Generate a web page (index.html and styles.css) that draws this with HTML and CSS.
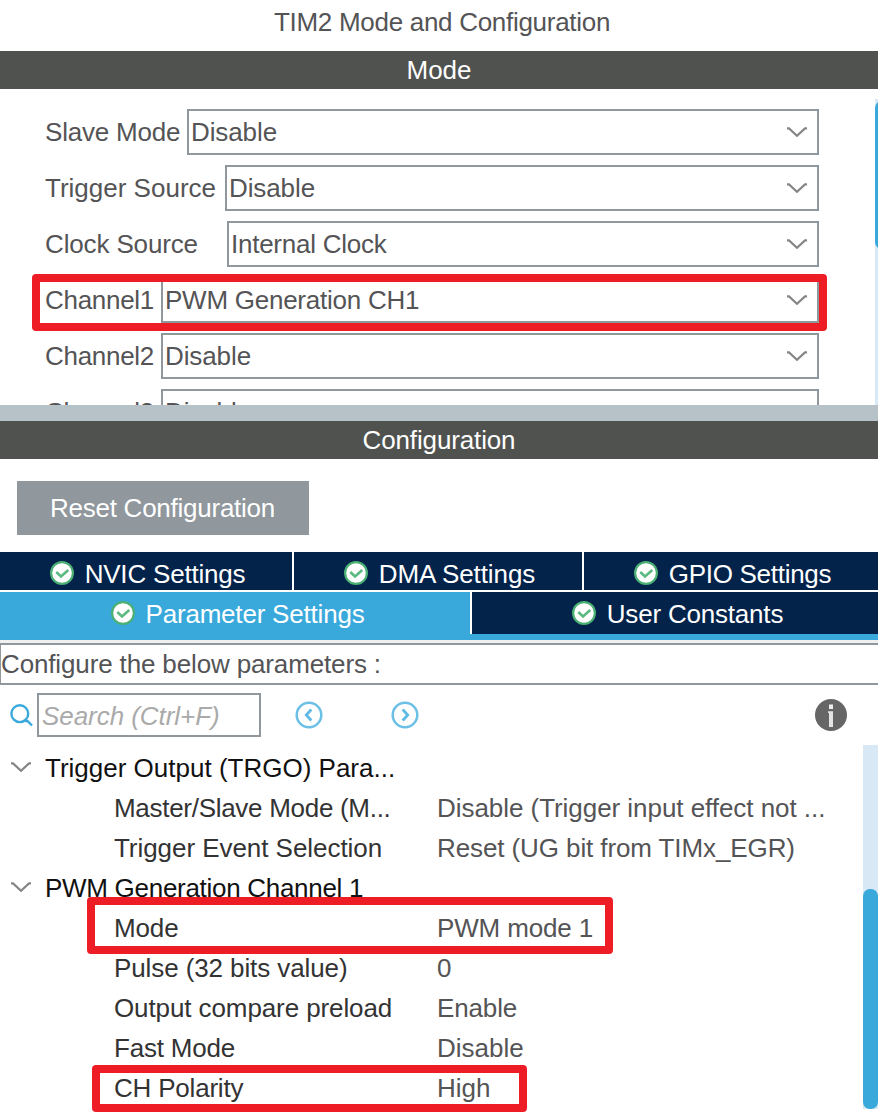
FILE: index.html
```html
<!DOCTYPE html>
<html lang="en">
<head>
<meta charset="utf-8">
<title>TIM2 Mode and Configuration</title>
<link rel="stylesheet" href="styles.css">
</head>
<body>
<svg class="defs" aria-hidden="true">
  <symbol id="chevron" viewBox="0 0 20 11"><path d="M0 1.4 H2 L10 8.8 L18 1.4 H20" fill="none" stroke="#858585" stroke-width="2.1"/></symbol>
  <symbol id="check" viewBox="0 0 24 24"><circle cx="12" cy="12" r="10.9" fill="#fff" stroke="#4bb073" stroke-width="2.2"/><path d="M6.3 11 L11 15.5 L18.3 9" fill="none" stroke="#5cba80" stroke-width="2.6"/></symbol>
</svg>
<main class="app">
  <h1 class="title"><span class="k6">TIM2 Mode and Configuration</span></h1>
  <h2 class="bar">Mode</h2>
  <section class="mode">
    <div class="fields">
      <div class="field"><label class="w-slave k4">Slave Mode</label><div class="combo"><span class="k2">Disable</span><svg class="chev"><use href="#chevron"/></svg></div></div>
      <div class="field"><label class="w-trigger">Trigger Source</label><div class="combo"><span class="k2">Disable</span><svg class="chev"><use href="#chevron"/></svg></div></div>
      <div class="field"><label class="w-clock k3">Clock Source</label><div class="combo"><span class="k5">Internal Clock</span><svg class="chev"><use href="#chevron"/></svg></div></div>
      <div class="field"><label class="w-channel k6">Channel1</label><div class="combo"><span class="k5">PWM Generation CH1</span><svg class="chev"><use href="#chevron"/></svg></div><i class="mark mark-channel"></i></div>
      <div class="field"><label class="w-channel k6">Channel2</label><div class="combo"><span class="k2">Disable</span><svg class="chev"><use href="#chevron"/></svg></div></div>
      <div class="field"><label class="w-channel k6">Channel3</label><div class="combo"><span class="k2">Disable</span><svg class="chev"><use href="#chevron"/></svg></div></div>
    </div>
    <div class="mode-scroll"><div class="mode-thumb"></div></div>
  </section>
  <div class="splitter"></div>
  <h2 class="bar"><span class="k3">Configuration</span></h2>
  <div class="actions"><button class="reset k5">Reset Configuration</button></div>
  <nav class="tabs">
    <div class="tabrow upper">
      <div class="tab"><svg class="ok"><use href="#check"/></svg><span class="k4">NVIC Settings</span></div>
      <div class="tab"><svg class="ok"><use href="#check"/></svg><span class="k2">DMA Settings</span></div>
      <div class="tab"><svg class="ok"><use href="#check"/></svg><span class="k6">GPIO Settings</span></div>
    </div>
    <div class="tabrow lower">
      <div class="tab active"><svg class="ok"><use href="#check"/></svg><span class="k4">Parameter Settings</span></div>
      <div class="tab"><svg class="ok"><use href="#check"/></svg><span class="k4">User Constants</span></div>
    </div>
  </nav>
  <div class="hint"><span class="k3">Configure the below parameters :</span></div>
  <div class="tools">
    <svg class="lens" viewBox="0 0 24 24"><circle cx="10.8" cy="10.7" r="8.4" fill="none" stroke="#39a9dc" stroke-width="2.4"/><path d="M15.5 18 H18.5 L23 22.5" fill="none" stroke="#39a9dc" stroke-width="2.4"/></svg>
    <div class="search"><span class="k1">Search (Ctrl+F)</span></div>
    <svg class="prev" viewBox="0 0 28 28"><circle cx="14" cy="14" r="12.3" fill="none" stroke="#6cc0e6" stroke-width="2.5"/><path d="M16.3 8.5 L11.3 14 L16.3 19.5" fill="none" stroke="#5fb9e3" stroke-width="2.8"/></svg>
    <svg class="next" viewBox="0 0 28 28"><circle cx="14" cy="14" r="12.3" fill="none" stroke="#6cc0e6" stroke-width="2.5"/><path d="M11.7 8.5 L16.7 14 L11.7 19.5" fill="none" stroke="#5fb9e3" stroke-width="2.8"/></svg>
    <svg class="info" viewBox="0 0 32 32"><circle cx="16" cy="16" r="16" fill="#666"/><rect x="14" y="5.5" width="4" height="4.5" fill="#eee"/><path d="M13 12.3 H18 V28 H14 V14 H13 Z" fill="#e4e4e4"/></svg>
  </div>
  <section class="params">
    <div class="tree">
      <div class="group"><svg class="chev"><use href="#chevron"/></svg><span>Trigger Output (TRGO) Para...</span></div>
      <div class="row"><span class="name k6">Master/Slave Mode (M...</span><span class="value k1">Disable (Trigger input effect not ...</span></div>
      <div class="row"><span class="name k1">Trigger Event Selection</span><span class="value k2">Reset (UG bit from TIMx_EGR)</span></div>
      <div class="group"><svg class="chev"><use href="#chevron"/></svg><span class="k6">PWM Generation Channel 1</span></div>
      <div class="row"><span class="name k3">Mode</span><span class="value k3">PWM mode 1</span><i class="mark mark-mode"></i></div>
      <div class="row"><span class="name k2">Pulse (32 bits value)</span><span class="value">0</span></div>
      <div class="row"><span class="name k2">Output compare preload</span><span class="value k3">Enable</span></div>
      <div class="row"><span class="name k4">Fast Mode</span><span class="value">Disable</span></div>
      <div class="row"><span class="name k4">CH Polarity</span><span class="value">High</span><i class="mark mark-polarity"></i></div>
    </div>
    <div class="param-scroll"><div class="param-thumb"></div></div>
  </section>
</main>
</body>
</html>
```
FILE: styles.css
```css
* { box-sizing: border-box; }
body { margin: 0; background: #fff; overflow: hidden; }
.defs { display: none; }
.app {
  width: 878px; height: 1114px; display: flex; flex-direction: column; overflow: hidden;
  font: 26px/30px "Liberation Sans", Arial, sans-serif; color: #545456; white-space: nowrap;
}
/* tracking steps */
.k1 { letter-spacing: -.05px; }
.k2 { letter-spacing: -.1px; }
.k3 { letter-spacing: -.14px; }
.k4 { letter-spacing: -.2px; }
.k5 { letter-spacing: -.25px; }
.k6 { letter-spacing: -.29px; }

.title, .bar { margin: 0; font-size: 26px; font-weight: 400; text-align: center; flex: none; }
.title { height: 51px; padding: 7px 0 0 6px; }
.bar { height: 38px; padding-top: 4px; background: #50524f; color: #fff; }

.mode { height: 316px; display: flex; justify-content: space-between; padding-left: 45px; overflow: hidden; flex: none; }
.fields { width: 774px; padding-top: 20px; display: flex; flex-direction: column; gap: 10px; }
.field { position: relative; display: flex; height: 46px; flex: none; }
.field label { padding-top: 8px; flex: none; }
.w-slave { width: 142px; }
.w-trigger { width: 180px; }
.w-clock { width: 182px; }
.w-channel { width: 116px; }
.combo { flex: 1; display: flex; justify-content: space-between; border: 2px solid #90979d; padding: 6px 10px 0 2px; }
.chev { width: 20px; height: 11px; flex: none; }
.combo .chev { margin-top: 10px; }
.mode-scroll { width: 3px; margin-top: 10px; padding-top: 2px; background: #d9e8f5; overflow: hidden; }
.mode-thumb { width: 15px; height: 148px; border-radius: 7px; background: #39a9dc; }

.mark { position: absolute; border: 8px solid #ee1c25; border-radius: 4px; }
.mark-channel { left: -13px; top: -3px; width: 795px; height: 57px; }
.mark-mode { left: 87px; top: -11px; width: 526px; height: 57px; }
.mark-polarity { left: 92px; top: -3px; width: 435px; height: 47px; }

.splitter { height: 16px; background: #b7c2c8; flex: none; }
.actions { height: 93px; padding: 22px 17px; flex: none; }
.reset { display: block; width: 292px; height: 54px; padding: 0 1px 0 0; border: 0; background: #90979d; color: #fff; font: inherit; }

.tabs { height: 88px; display: flex; flex-direction: column; gap: 2px; flex: none; color: #fff; }
.tabrow { display: grid; column-gap: 2px; }
.upper { height: 38px; grid-template-columns: 292px 288px 1fr; }
.lower { height: 48px; grid-template-columns: 470px 1fr; border-bottom: 6px solid #39a9dc; }
.tab { display: flex; justify-content: center; gap: 11px; background: #03234b; padding: 7px 0 0 3px; }
.lower .tab { height: 42px; padding-left: 5px; }
.tab.active { height: 48px; background: #39a9dc; }
.ok { width: 24px; height: 24px; margin-top: 2px; flex: none; }

.hint { height: 45px; border-top: 3px solid #f0f0f0; flex: none; display: flex; }
.hint span { flex: 1; height: 42px; border: 2px solid #90979d; border-left-width: 1px; border-right: 0; padding-top: 4px; }

.tools { height: 60px; display: flex; padding: 8px 31px 0 9px; flex: none; }
.lens { width: 24px; height: 24px; margin-top: 10px; }
.search { width: 224px; height: 44px; margin-left: 4px; border: 2px solid #90979d; padding: 6px 3px; color: #aaa; font-style: italic; }
.prev, .next { width: 28px; height: 28px; margin: 8px 0 0 34px; }
.next { margin-left: 68px; }
.info { width: 32px; height: 32px; margin: 6px 0 0 auto; }

.params { display: flex; height: 364px; flex: none; }
.tree { width: 863px; padding-top: 3px; }
.group, .row { height: 40px; padding-top: 5px; display: flex; position: relative; }
.group { color: #111; padding-left: 11px; gap: 14px; }
.group .chev { margin-top: 9px; }
.row { padding-left: 114px; }
.name { width: 323px; color: #333; }
.value { color: #545456; }
.param-scroll { width: 15px; padding-top: 144px; background: #d9e8f5; }
.param-thumb { height: 220px; border-radius: 7px; background: #39a9dc; }
```
